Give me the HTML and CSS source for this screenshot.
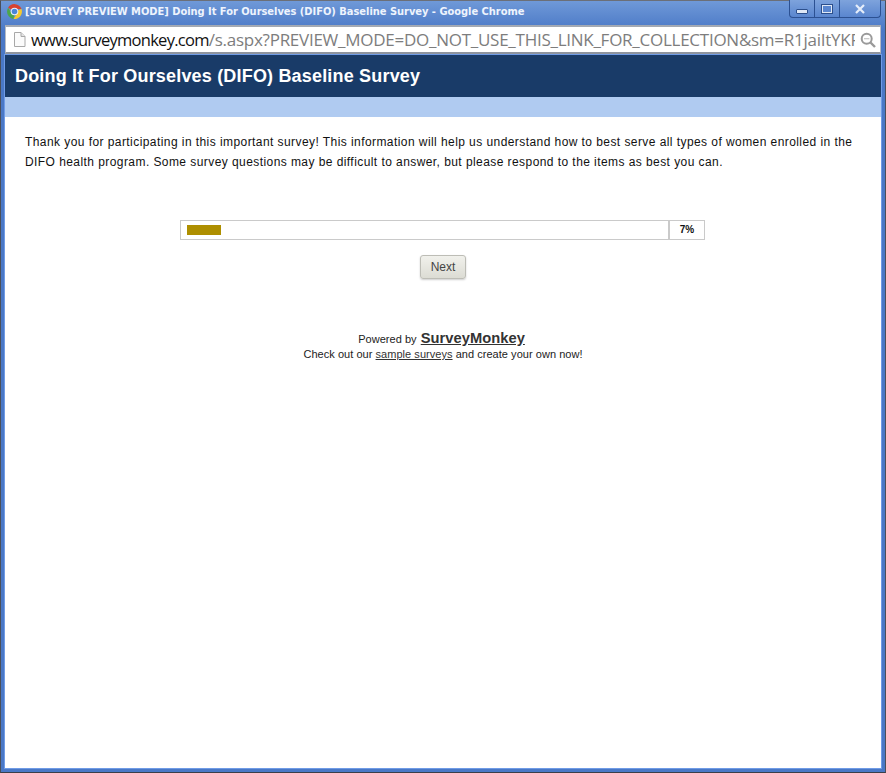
FILE: index.html
```html
<!DOCTYPE html>
<html lang="en">
<head>
<meta charset="utf-8">
<title>Doing It For Ourselves (DIFO) Baseline Survey</title>
<link rel="stylesheet" href="styles.css">
</head>
<body>
<div class="window">
  <div class="titlebar">
    <svg class="chrome-logo" width="15" height="15" viewBox="0.5 0.5 15 15">
      <path d="M8 8 L1.6 4.2 A7.5 7.5 0 0 1 15 5.4 L8 5.4Z" fill="#d8422f"/>
      <path d="M8 8 L15 5.4 A7.5 7.5 0 0 1 7 15.4 L10.5 9.5Z" fill="#f5c92f"/>
      <path d="M8 8 L7 15.4 A7.5 7.5 0 0 1 1.6 4.2 L5 9.5Z" fill="#4da64a"/>
      <circle cx="8" cy="8" r="3.8" fill="#eef3fa"/>
      <circle cx="8" cy="8" r="2.8" fill="#4a86d8"/>
    </svg>
    <span class="window-title">[SURVEY PREVIEW MODE] Doing It For Ourselves (DIFO) Baseline Survey - Google Chrome</span>
    <div class="controls">
      <div class="control control-min"><span class="min-glyph"></span></div>
      <div class="control control-max"><span class="max-glyph"></span></div>
      <div class="control control-close">
        <svg width="12" height="10" viewBox="0 0 12 10"><path d="M2 1 L10 9 M10 1 L2 9" stroke="#e6eefa" stroke-width="2.2" fill="none"/></svg>
      </div>
    </div>
  </div>
  <div class="addressbar">
    <svg class="page-icon" width="13" height="15" viewBox="0 0 13 15">
      <path d="M1.5 .5 H8 L12 4.5 V14.5 H1.5Z" fill="#fbfbfb" stroke="#a8a8a8"/>
      <path d="M8 .5 V4.5 H12" fill="#e4e4e4" stroke="#a8a8a8"/>
    </svg>
    <div class="url"><span class="url-host">www.surveymonkey.com</span><span class="url-path">/s.aspx?PREVIEW_MODE=DO_NOT_USE_THIS_LINK_FOR_COLLECTION&amp;sm=R1jaiItYKFx</span></div>
    <svg class="search-icon" width="16" height="16" viewBox="0 0 16 16">
      <circle cx="6.7" cy="6.7" r="5" fill="none" stroke="#9a9a9a" stroke-width="2"/>
      <path d="M4 6.7 H9.4" stroke="#c4c4c4" stroke-width="1.2"/>
      <path d="M10.5 10.5 L15 15" stroke="#9a9a9a" stroke-width="2.4"/>
    </svg>
  </div>
  <main class="page">
    <header class="survey-header">
      <h1 class="survey-title">Doing It For Ourselves (DIFO) Baseline Survey</h1>
    </header>
    <div class="band"></div>
    <p class="intro">Thank you for participating in this important survey! This information will help us understand how to best serve all types of women enrolled in the DIFO health program. Some survey questions may be difficult to answer, but please respond to the items as best you can.</p>
    <div class="progress">
      <div class="progress-track"><div class="progress-fill" style="width:34px"></div></div>
      <div class="progress-label">7%</div>
    </div>
    <button class="next" type="button">Next</button>
    <footer class="powered">
      <div class="powered-line">Powered by <a class="brand" href="#">SurveyMonkey</a></div>
      <div class="check-line">Check out our <a class="sample" href="#">sample surveys</a> and create your own now!</div>
    </footer>
  </main>
</div>
</body>
</html>
```

FILE: styles.css
```css
* { box-sizing: border-box; }
html, body { margin: 0; padding: 0; height: 100%; overflow: hidden; }
body { background: #fff; font-family: "Liberation Sans", Arial, sans-serif; }

.window {
  width: 886px;
  height: 773px;
  display: flex;
  flex-direction: column;
  background: linear-gradient(#6f99d8, #4a78c6 30px);
  border: 1px solid #4a4f5a;
  border-top-color: #6b6f78;
  border-bottom-color: #3a3f4a;
  padding: 0 4px 4px 3px;
}

.titlebar {
  height: 24px;
  flex: none;
  display: flex;
  align-items: flex-start;
  padding-left: 3px;
}
.chrome-logo { margin-top: 3px; flex: none; }
.window-title {
  margin-left: 3px;
  margin-top: 3px;
  font: bold 11px/16px "DejaVu Sans Condensed", "DejaVu Sans", sans-serif;
  letter-spacing: -0.02px;
  color: #eef4fd;
  white-space: nowrap;
}
.controls {
  margin-left: auto;
  margin-top: -1px;
  height: 18px;
  display: flex;
  border: 1px solid #2c5192;
  border-top: none;
  border-radius: 0 0 4px 4px;
  background: linear-gradient(#7ea3dc, #5a86cf);
}
.control {
  height: 17px;
  display: flex;
  align-items: center;
  justify-content: center;
}
.control-min { width: 25px; border-right: 1px solid #2c5192; }
.control-max { width: 25px; border-right: 1px solid #2c5192; }
.control-close { width: 40px; }
.min-glyph { width: 12px; height: 5px; margin-top: 6px; background: #dfe8f6; border: 1px solid #2c4f8c; border-radius: 1px; }
.max-glyph { width: 12px; height: 10px; background: #5a86cf; border: 2px solid #dfe8f6; outline: 1px solid #2c4f8c; outline-offset: -1px; }

.addressbar {
  height: 29px;
  flex: none;
  margin: 0 0 1px 1px;
  display: flex;
  align-items: center;
  background: #fff;
  border: 1px solid #b4bac4;
  border-top: 2px solid #a3a9b3;
  border-bottom: 2px solid #8e949e;
  padding-left: 7px;
  padding-right: 4px;
}
.page-icon { flex: none; }
.url {
  flex: 1;
  min-width: 0;
  margin-left: 5px;
  margin-right: 5px;
  overflow: hidden;
  white-space: nowrap;
  font: 17px/24px "Open Sans", sans-serif;
}
.url-host { color: #111; font-size: 16.5px; letter-spacing: -0.72px; }
.url-path { color: #7d7d7d; letter-spacing: -0.26px; }
.search-icon { flex: none; }

.page {
  flex: 1;
  min-height: 0;
  background: #fff;
  margin-left: 1px;
  box-shadow: 0 0 0 1px #6f9be6;
  display: flex;
  flex-direction: column;
}
.survey-header {
  height: 42px;
  flex: none;
  background: #193b68;
  padding: 0 10px;
  display: flex;
  align-items: center;
}
.survey-title {
  margin: 0;
  font: bold 18px/22px "Liberation Sans", Arial, sans-serif;
  letter-spacing: 0.18px;
  color: #fff;
}
.band { height: 20px; flex: none; background: #b0cbf1; }
.intro {
  margin: 15px 0 0;
  padding: 0 20px;
  font-size: 12px;
  line-height: 20px;
  letter-spacing: 0.43px;
  color: #111;
}
.progress {
  margin: 48px 176px 0 175px;
  height: 20px;
  flex: none;
  display: flex;
  border: 1px solid #cacaca;
}
.progress-track {
  flex: 1;
  padding: 4px 6px;
  border-right: 2px solid #cacaca;
}
.progress-fill { height: 10px; background: #ae8f00; }
.progress-label {
  width: 34px;
  text-align: center;
  font-size: 10px;
  font-weight: bold;
  line-height: 18px;
  color: #111;
}
.next {
  align-self: center;
  margin-top: 15px;
  width: 46px;
  height: 24px;
  padding: 0;
  font: 12px "Liberation Sans", Arial, sans-serif;
  color: #444;
  background: linear-gradient(#f1f1ec, #dcdcd4);
  border: 1px solid #bdbdb6;
  border-radius: 3px;
  box-shadow: 0 1px 2px rgba(0,0,0,.2);
}
.powered {
  margin-top: 49px;
  text-align: center;
  font-size: 11px;
  letter-spacing: 0.04px;
  color: #222;
}
.powered-line { line-height: 20px; padding-right: 3px; }
.check-line { line-height: 10px; }
.brand {
  font-size: 14.7px;
  font-weight: bold;
  color: #333;
  margin-left: 1px;
}
.sample { color: #333; }
```
